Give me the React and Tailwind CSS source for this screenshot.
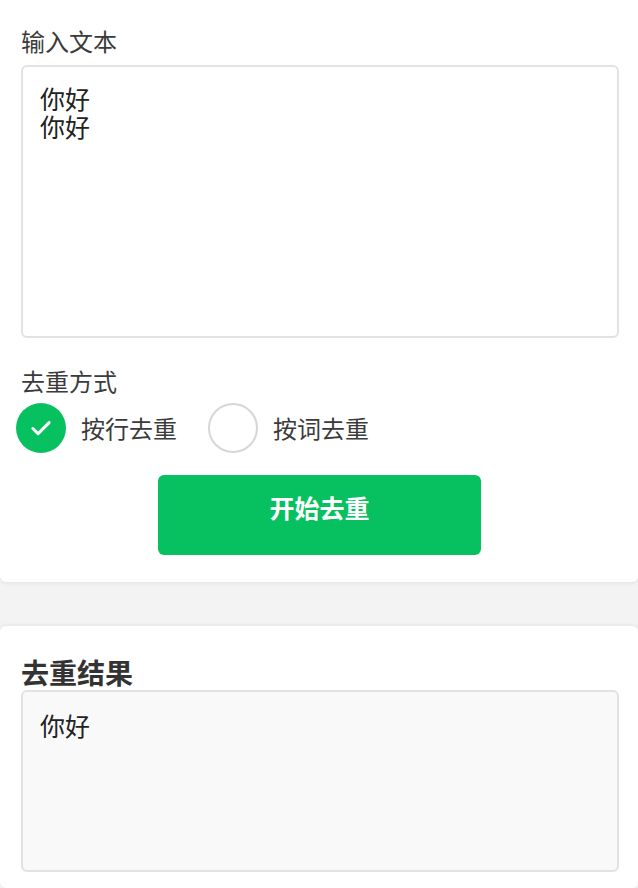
import { useState } from "react";

const font = { fontFamily: '"Noto Sans CJK SC", "Noto Sans", sans-serif' };

const modes = [
  { key: "line", label: "按行去重" },
  { key: "word", label: "按词去重" },
];

const Radio = ({ checked, label, onClick }) => (
  <button type="button" onClick={onClick} className="flex items-center gap-[15px]">
    {checked ? (
      <span className="flex h-[50px] w-[50px] items-center justify-center rounded-full bg-[#07c160]">
        <svg width="26" height="26" viewBox="0 0 24 24" fill="none">
          <path d="M4.5 12.5l4.8 4.8L19.5 7" stroke="#fff" strokeWidth="2.8" strokeLinecap="round" strokeLinejoin="round" />
        </svg>
      </span>
    ) : (
      <span className="h-[50px] w-[50px] rounded-full border-2 border-[#d6d6d6] bg-white" />
    )}
    <span className="text-[24px] leading-[30px] text-[#3b3b3b]">{label}</span>
  </button>
);

export default function App() {
  const [mode, setMode] = useState("line");
  const [input, setInput] = useState("你好\n你好");

  return (
    <div className="min-h-screen bg-[#f3f3f3]" style={font}>
      <div className="rounded-b-md bg-white pl-[21px] pr-[19px] pt-[26px] pb-[27px] shadow-[0_1px_4px_rgba(0,0,0,0.08)]">
        <div className="text-[24px] leading-[30px] text-[#3b3b3b]">输入文本</div>
        <textarea
          value={input}
          onChange={(e) => setInput(e.target.value)}
          className="mt-[9px] block h-[273px] w-full resize-none rounded-md border-2 border-[#e2e2e2] bg-white px-[17px] pt-[17px] text-[25px] leading-[28px] text-[#222] outline-none"
        />
        <div className="mt-[28px] text-[24px] leading-[30px] text-[#3b3b3b]">去重方式</div>
        <div className="-ml-[5px] mt-[7px] flex items-center gap-[31px]">
          {modes.map((m) => (
            <Radio key={m.key} label={m.label} checked={mode === m.key} onClick={() => setMode(m.key)} />
          ))}
        </div>
        <div className="mt-[22px] flex justify-center pr-[1px]">
          <button
            type="button"
            className="flex h-[80px] w-[323px] items-center justify-center rounded-md bg-[#07c160] pb-[14px] text-[25px] font-bold text-white"
          >
            开始去重
          </button>
        </div>
      </div>

      <div className="mt-[44px] rounded-md bg-white pl-[21px] pr-[19px] pt-[30px] pb-[16px] shadow-[0_-1px_4px_rgba(0,0,0,0.06)]">
        <div className="text-[28px] font-bold leading-[33px] text-[#333]">去重结果</div>
        <textarea
          readOnly
          value="你好"
          className="mt-[1px] block h-[182px] w-full resize-none rounded-md border-2 border-[#e2e2e2] bg-[#f9f9f9] px-[17px] pt-[19px] text-[25px] leading-[28px] text-[#222] outline-none"
        />
      </div>
    </div>
  );
}
